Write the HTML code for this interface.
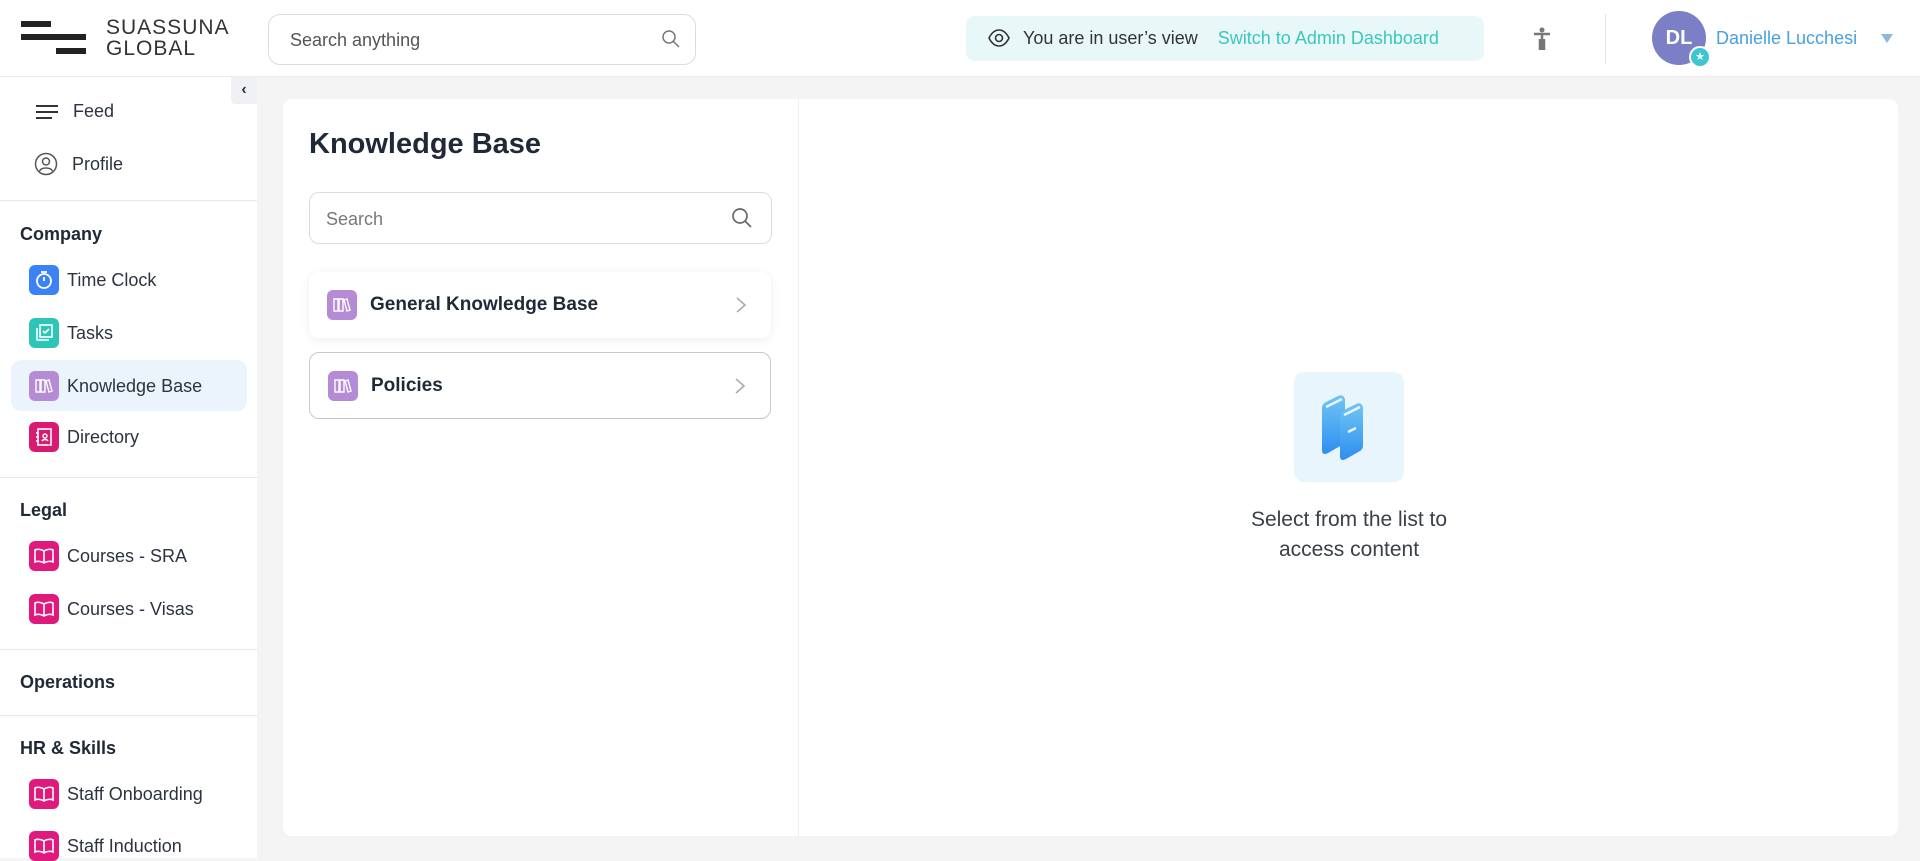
<!DOCTYPE html>
<html><head><meta charset="utf-8"><style>
*{box-sizing:border-box;margin:0;padding:0}
body{width:1920px;height:858px;overflow:hidden;background:#f4f4f5;font-family:"Liberation Sans",sans-serif;color:#1f2937;position:relative}
.abs{position:absolute}
header{position:absolute;left:0;top:0;width:1920px;height:77px;background:#fff;border-bottom:1px solid #ececec}
.side{position:absolute;left:0;top:77px;width:257px;height:781px;background:#fff}
.nav{position:absolute;left:29px;display:flex;align-items:center;font-size:18px;color:#2d3340}
.nav .ic{width:30px;height:30px;border-radius:6px;margin-right:8px;display:flex;align-items:center;justify-content:center}
.sec{position:absolute;left:20px;font-size:18px;font-weight:bold;color:#1f2937}
.hr{position:absolute;left:0;width:257px;height:1px;background:#e8e8e8}
.card{position:absolute;left:283px;top:99px;width:1615px;height:737px;background:#fff;border-radius:9px}
.item{position:absolute;left:309px;width:462px;background:#fff;border-radius:10px;display:flex;align-items:center;font-size:19px;font-weight:bold;color:#1f2937}
.kbic{width:30px;height:30px;border-radius:6px;background:#b68bd6;margin:0 13px 0 18px;display:flex;align-items:center;justify-content:center}
.chev{position:absolute;right:24px;top:50%;margin-top:-9px}
</style></head><body>
<header>
 <div class="abs" style="left:21px;top:21px;width:30px;height:6px;background:#222"></div>
 <div class="abs" style="left:21px;top:34px;width:65px;height:6px;background:#222"></div>
 <div class="abs" style="left:56px;top:48px;width:30px;height:6px;background:#222"></div>
 <div class="abs" style="left:106px;top:17px;font-size:21px;line-height:21px;letter-spacing:1px;color:#333">SUASSUNA<br>GLOBAL</div>
 <div class="abs" style="left:268px;top:14px;width:428px;height:51px;border:1px solid #dcdcdc;border-radius:12px;font-size:18px;color:#555;padding:15px 0 0 21px">Search anything
  <svg class="abs" style="right:14px;top:14px" width="20" height="20" viewBox="0 0 20 20"><circle cx="8" cy="8" r="6" fill="none" stroke="#777" stroke-width="1.5"/><path d="M12.5 12.5L18 18" stroke="#777" stroke-width="1.5"/></svg></div>
 <div class="abs" style="left:966px;top:16px;width:518px;height:45px;background:#e8f8f8;border-radius:9px;font-size:18px;color:#333;padding:12px 0 0 57px">You are in user’s view<span style="color:#3cc6c0;margin-left:20px">Switch to Admin Dashboard</span>
  <svg class="abs" style="left:22px;top:12px" width="22" height="20" viewBox="0 0 22 20"><path d="M1 10C4 4 8 2 11 2s7 2 10 8c-3 6-7 8-10 8S4 16 1 10z" fill="none" stroke="#333" stroke-width="1.6"/><circle cx="11" cy="10" r="3.5" fill="none" stroke="#333" stroke-width="1.6"/></svg></div>
 <svg class="abs" style="left:1533px;top:27px" width="18" height="24" viewBox="0 0 18 24"><circle cx="9" cy="3" r="2.5" fill="#777"/><path d="M1 7h16" stroke="#777" stroke-width="2.5"/><path d="M9 7v16M7 12v11M11 12v11" stroke="#777" stroke-width="2.5"/></svg>
 <div class="abs" style="left:1605px;top:14px;width:1px;height:50px;background:#e6e6e6"></div>
 <div class="abs" style="left:1652px;top:11px;width:54px;height:54px;border-radius:50%;background:#7b7fc6;color:#fff;font-weight:bold;font-size:20px;text-align:center;line-height:54px">DL</div>
 <div class="abs" style="left:1689px;top:46px;width:22px;height:22px;border-radius:50%;background:#3cc6d0;border:2px solid #fff;color:#fff;font-size:11px;text-align:center;line-height:18px">★</div>
 <div class="abs" style="left:1716px;top:28px;font-size:18px;color:#4aa0e0">Danielle Lucchesi</div>
 <div class="abs" style="left:1881px;top:34px;width:0;height:0;border-left:6px solid transparent;border-right:6px solid transparent;border-top:9px solid #8ab8e0"></div>
</header>
<div class="side">
 <div class="abs" style="left:231px;top:0;width:26px;height:27px;background:#eef0f3;border-radius:0 0 0 4px;text-align:center;font-size:16px;line-height:26px;color:#333;font-weight:bold">‹</div>
 <div class="nav" style="top:24px"><svg width="24" height="20" style="margin-right:14px;margin-left:6px"><path d="M1 4h22M1 10h22M1 16h16" stroke="#333" stroke-width="2"/></svg>Feed</div>
 <div class="nav" style="top:75px"><svg width="24" height="24" style="margin-right:14px;margin-left:5px" viewBox="0 0 24 24"><circle cx="12" cy="12" r="10.5" fill="none" stroke="#555" stroke-width="1.5"/><circle cx="12" cy="9.5" r="3.5" fill="none" stroke="#555" stroke-width="1.5"/><path d="M5.5 19c2-4 11-4 13 0" fill="none" stroke="#555" stroke-width="1.5"/></svg>Profile</div>
 <div class="hr" style="top:123px"></div>
 <div class="sec" style="top:147px">Company</div>
 <div class="nav" style="top:188px"><div class="ic" style="background:#3b82f6"><svg width="20" height="20" viewBox="0 0 20 20"><circle cx="10" cy="11" r="7" fill="none" stroke="#fff" stroke-width="1.8"/><path d="M7 2h6M10 11V7" stroke="#fff" stroke-width="1.8"/></svg></div>Time Clock</div>
 <div class="nav" style="top:241px"><div class="ic" style="background:#2ec4b6"><svg width="20" height="20" viewBox="0 0 20 20"><rect x="6" y="2" width="12" height="12" fill="none" stroke="#fff" stroke-width="1.6"/><path d="M3 5v12h12M9 8l2 2 4-4" fill="none" stroke="#fff" stroke-width="1.6"/></svg></div>Tasks</div>
 <div class="abs" style="left:11px;top:283px;width:236px;height:51px;background:#ebf3fd;border-radius:10px"></div>
 <div class="nav" style="top:294px"><div class="ic" style="background:#b68bd6"><svg width="20" height="18" viewBox="0 0 20 18"><path d="M2 3h4v12H2zM7 3h4v12H7zM12 4l3-1 3 11-3 1z" fill="none" stroke="#fff" stroke-width="1.4"/></svg></div>Knowledge Base</div>
 <div class="nav" style="top:345px"><div class="ic" style="background:#d81b70"><svg width="20" height="20" viewBox="0 0 20 20"><rect x="4" y="2" width="13" height="16" fill="none" stroke="#fff" stroke-width="1.6"/><circle cx="11" cy="9" r="2" fill="none" stroke="#fff" stroke-width="1.4"/><path d="M8 14c1-2 5-2 6 0M2 6h3M2 10h3M2 14h3" stroke="#fff" stroke-width="1.4" fill="none"/></svg></div>Directory</div>
 <div class="hr" style="top:400px"></div>
 <div class="sec" style="top:423px">Legal</div>
 <div class="nav" style="top:464px"><div class="ic" style="background:#e0197d"><svg width="22" height="18" viewBox="0 0 22 18"><path d="M11 4C8 2 4 2 2 3v12c2-1 6-1 9 1 3-2 7-2 9-1V3c-2-1-6-1-9 1zM11 4v12" fill="none" stroke="#fff" stroke-width="1.6"/></svg></div>Courses - SRA</div>
 <div class="nav" style="top:517px"><div class="ic" style="background:#e0197d"><svg width="22" height="18" viewBox="0 0 22 18"><path d="M11 4C8 2 4 2 2 3v12c2-1 6-1 9 1 3-2 7-2 9-1V3c-2-1-6-1-9 1zM11 4v12" fill="none" stroke="#fff" stroke-width="1.6"/></svg></div>Courses - Visas</div>
 <div class="hr" style="top:572px"></div>
 <div class="sec" style="top:595px">Operations</div>
 <div class="hr" style="top:638px"></div>
 <div class="sec" style="top:661px">HR &amp; Skills</div>
 <div class="nav" style="top:702px"><div class="ic" style="background:#e0197d"><svg width="22" height="18" viewBox="0 0 22 18"><path d="M11 4C8 2 4 2 2 3v12c2-1 6-1 9 1 3-2 7-2 9-1V3c-2-1-6-1-9 1zM11 4v12" fill="none" stroke="#fff" stroke-width="1.6"/></svg></div>Staff Onboarding</div>
 <div class="nav" style="top:754px"><div class="ic" style="background:#e0197d"><svg width="22" height="18" viewBox="0 0 22 18"><path d="M11 4C8 2 4 2 2 3v12c2-1 6-1 9 1 3-2 7-2 9-1V3c-2-1-6-1-9 1zM11 4v12" fill="none" stroke="#fff" stroke-width="1.6"/></svg></div>Staff Induction</div>
</div>
<div class="card">
 <div class="abs" style="left:515px;top:0;width:1px;height:737px;background:#eeeeee"></div>
 <div class="abs" style="left:26px;top:29px;font-size:29px;font-weight:bold;color:#1f2937">Knowledge Base</div>
 <div class="abs" style="left:26px;top:93px;width:463px;height:52px;border:1px solid #dcdcdc;border-radius:10px;font-size:18px;color:#777;padding:16px 0 0 16px">Search
  <svg class="abs" style="right:18px;top:14px" width="22" height="22" viewBox="0 0 22 22"><circle cx="9" cy="9" r="7" fill="none" stroke="#666" stroke-width="1.7"/><path d="M14 14l6 6" stroke="#666" stroke-width="1.7"/></svg></div>
</div>
<div class="item" style="top:272px;height:66px;box-shadow:0 2px 10px rgba(0,0,0,.07)"><div class="kbic"><svg width="20" height="18" viewBox="0 0 20 18"><path d="M2 3h4v12H2zM7 3h4v12H7zM12 4l3-1 3 11-3 1z" fill="none" stroke="#fff" stroke-width="1.4"/></svg></div>General Knowledge Base<svg class="chev" width="12" height="18" viewBox="0 0 12 18"><path d="M2 2l8 7-8 7" fill="none" stroke="#aaa" stroke-width="1.6"/></svg></div>
<div class="item" style="top:352px;height:67px;border:1.5px solid #c8c8c8"><div class="kbic"><svg width="20" height="18" viewBox="0 0 20 18"><path d="M2 3h4v12H2zM7 3h4v12H7zM12 4l3-1 3 11-3 1z" fill="none" stroke="#fff" stroke-width="1.4"/></svg></div>Policies<svg class="chev" width="12" height="18" viewBox="0 0 12 18"><path d="M2 2l8 7-8 7" fill="none" stroke="#aaa" stroke-width="1.6"/></svg></div>
<div class="abs" style="left:1294px;top:372px;width:110px;height:110px;background:#e8f5fd;border-radius:10px">
 <svg class="abs" style="left:24px;top:22px" width="62" height="68" viewBox="0 0 62 68"><defs><linearGradient id="g" x1="0" y1="0" x2="0" y2="1"><stop offset="0" stop-color="#70c6f3"/><stop offset="1" stop-color="#2f8ef0"/></linearGradient></defs>
 <path d="M4 14Q4 10 8 8L20 2Q24 0 26 3L27 5V46Q27 49 24 51L10 59Q4 62 4 56Z" fill="url(#g)"/>
 <path d="M8 13L24 5" stroke="#e8f5fd" stroke-width="2.5"/>
 <path d="M22 22Q22 18 26 16L38 10Q42 8 44 11L45 13V52Q45 55 42 57L28 65Q22 68 22 62Z" fill="url(#g)"/>
 <path d="M26 21L42 13M30 38L38 34" stroke="#e8f5fd" stroke-width="2.5"/></svg>
</div>
<div class="abs" style="left:1198px;top:505px;width:302px;text-align:center;font-size:21px;line-height:30px;color:#3a3f48">Select from the list to<br>access content</div>
</body></html>
